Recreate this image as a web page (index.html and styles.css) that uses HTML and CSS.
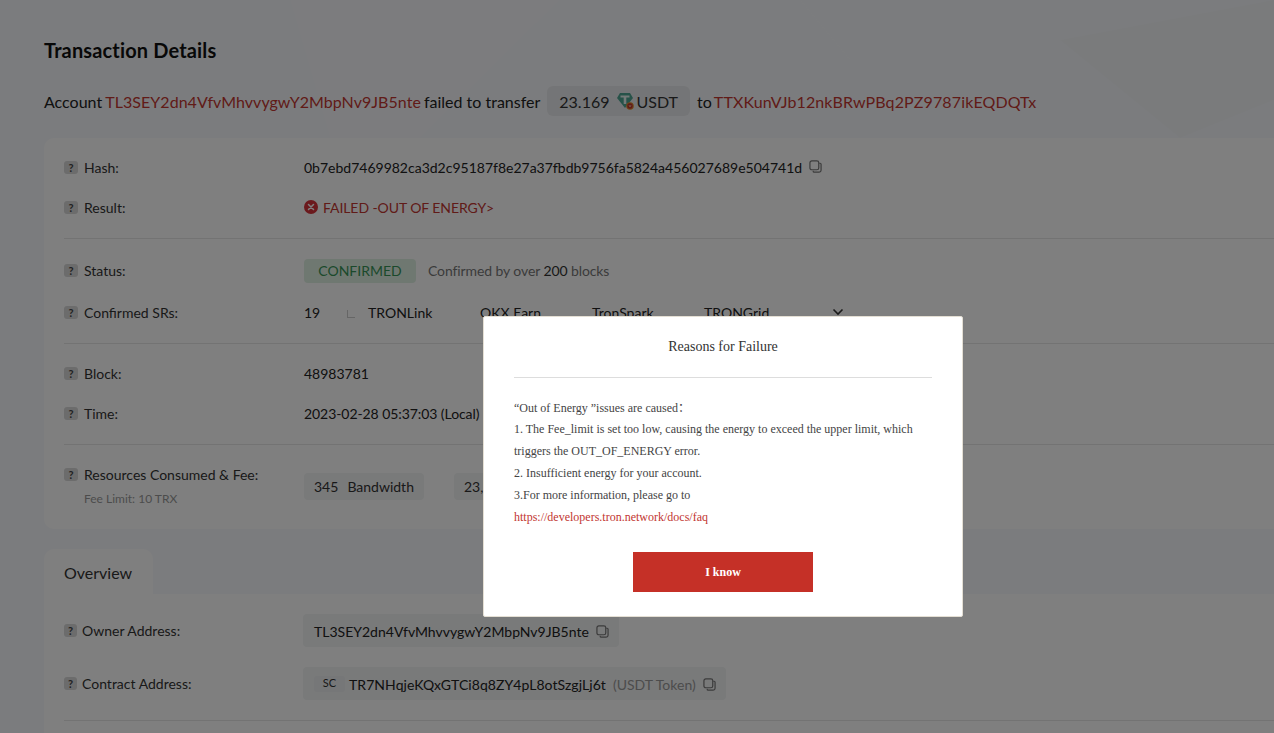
FILE: index.html
```html
<!DOCTYPE html>
<html lang="en">
<head>
   <meta charset="UTF-8">
   <title>Transaction Details</title>
   <link rel="stylesheet" href="styles.css">
</head>
<body>
   <svg class="backdrop" width="1274" height="138" viewBox="0 0 1274 138">
      <polygon points="290,0 560,0 420,138 330,138" fill="#fff" opacity="0.12"/>
      <polygon points="800,0 1000,0 850,60" fill="#fff" opacity="0.1"/>
      <polygon points="1060,40 1274,0 1274,100 1180,138" fill="#000" opacity="0.012"/>
   </svg>
   <div class="page">
      <h1>Transaction Details</h1>
      <div class="summary">
         <span>Account</span>
         <a class="link">TL3SEY2dn4VfvMhvvygwY2MbpNv9JB5nte</a>
         <span>failed to transfer</span>
         <span class="amount">
            <span class="amount-num">23.169</span>
            <svg class="token" width="17" height="18" viewBox="0 0 17 18">
               <path d="M3 1h10l3 5-8 10L0 6z" fill="#4fa593"/>
               <path d="M3.500 3.500h9v2H9.300v6.500H6.700V5.500H3.500z" fill="#e8f3f0"/>
               <circle cx="13" cy="14" r="3.800" fill="#e08a2e"/>
               <circle cx="13" cy="14" r="2.700" fill="#c23631"/>
               <path d="M12 13l1 2 1-2" fill="none" stroke="#f5d9a8" stroke-width="0.700"/>
            </svg>
            <span>USDT</span>
         </span>
         <span class="to">to</span>
         <a class="link to-link">TTXKunVJb12nkBRwPBq2PZ9787ikEQDQTx</a>
      </div>

      <div class="card">
         <div class="group first">
            <div class="row">
               <div class="label"><i class="help">?</i>Hash:</div>
               <div class="value">0b7ebd7469982ca3d2c95187f8e27a37fbdb9756fa5824a456027689e504741d
                  <svg class="copy" width="13" height="13" viewBox="0 0 14 14"><use href="#copy-icon"/></svg>
               </div>
            </div>
            <div class="row">
               <div class="label"><i class="help">?</i>Result:</div>
               <div class="value failed">
                  <svg class="fail-icon" width="14" height="14" viewBox="0 0 14 14">
                     <circle cx="7" cy="7" r="7" fill="#d6333a"/>
                     <path d="M4.500 4.500l5 5M9.500 4.500l-5 5" stroke="#fff" stroke-width="1.500" stroke-linecap="round"/>
                  </svg>
                  FAILED -OUT OF ENERGY&gt;
               </div>
            </div>
         </div>
         <div class="group tall">
            <div class="row">
               <div class="label"><i class="help">?</i>Status:</div>
               <div class="value flush">
                  <span class="status">CONFIRMED</span>
                  <span class="muted">Confirmed by over <b>200</b> blocks</span>
               </div>
            </div>
            <div class="row">
               <div class="label"><i class="help">?</i>Confirmed SRs:</div>
               <div class="value">
                  <span class="sr-count">19</span>
                  <span class="sr-corner"></span>
                  <span class="sr">TRONLink</span>
                  <span class="sr">OKX Earn</span>
                  <span class="sr">TronSpark</span>
                  <span class="sr">TRONGrid</span>
                  <svg class="chevron" width="12" height="8" viewBox="0 0 12 8"><path d="M1.500 1.500L6 6l4.500-4.500" fill="none" stroke="#333" stroke-width="1.600"/></svg>
               </div>
            </div>
         </div>
         <div class="group mid">
            <div class="row">
               <div class="label"><i class="help">?</i>Block:</div>
               <div class="value">48983781</div>
            </div>
            <div class="row">
               <div class="label"><i class="help">?</i>Time:</div>
               <div class="value time">2023-02-28 05:37:03 (Local)</div>
            </div>
         </div>
         <div class="group last">
            <div class="row resources">
               <div class="label-stack">
                  <div class="label"><i class="help">?</i>Resources Consumed &amp; Fee:</div>
                  <div class="fee-limit">Fee Limit: 10 TRX</div>
               </div>
               <div class="value">
                  <span class="res-pill"><span>345</span>Bandwidth</span>
                  <span class="res-pill wide"><span>23,169</span></span>
               </div>
            </div>
         </div>
      </div>

      <div class="tab">Overview</div>
      <div class="card overview">
         <div class="row owner">
            <div class="label"><i class="help small">?</i>Owner Address:</div>
            <div class="value flush">
               <span class="addr-pill">TL3SEY2dn4VfvMhvvygwY2MbpNv9JB5nte
                  <svg class="copy" width="13" height="13" viewBox="0 0 14 14"><use href="#copy-icon"/></svg>
               </span>
            </div>
         </div>
         <div class="row contract">
            <div class="label"><i class="help small">?</i>Contract Address:</div>
            <div class="value flush">
               <span class="addr-pill">
                  <span class="sc">SC</span><span class="contract-addr">TR7NHqjeKQxGTCi8q8ZY4pL8otSzgjLj6t</span>
                  <span class="token-name">(USDT Token)</span>
                  <svg class="copy" width="13" height="13" viewBox="0 0 14 14"><use href="#copy-icon"/></svg>
               </span>
            </div>
         </div>
         <div class="overview-line"></div>
      </div>
   </div>

   <svg width="0" height="0" class="defs">
      <symbol id="copy-icon" viewBox="0 0 14 14">
         <path d="M11 3.500h1a1 1 0 0 1 1 1V11a2 2 0 0 1-2 2H5.500a1 1 0 0 1-1-1v-.5" fill="none" stroke="#777" stroke-width="1.300"/>
         <rect x="1" y="1" width="9.500" height="9.500" rx="2" fill="none" stroke="#777" stroke-width="1.300"/>
      </symbol>
   </svg>

   <div class="mask"></div>
   <div class="modal">
      <div class="modal-title">Reasons for Failure</div>
      <div class="modal-body">
         <div class="first-line">“Out of Energy ”issues are caused：</div>
         <div>1. The Fee_limit is set too low, causing the energy to exceed the upper limit, which triggers the OUT_OF_ENERGY error.</div>
         <div>2. Insufficient energy for your account.</div>
         <div>3.For more information, please go to</div>
         <a class="modal-link">https://developers.tron.network/docs/faq</a>
      </div>
      <button class="modal-btn">I know</button>
   </div>
</body>
</html>
```

FILE: styles.css
```css
* { box-sizing: border-box; }
html, body {
   margin: 0;
   padding: 0;
   height: 733px;
   overflow: hidden;
}
body {
   position: relative;
   background: #f7f9fc;
   font-family: Lato, "Liberation Sans", sans-serif;
   font-size: 14px;
   color: #222;
}
.backdrop {
   position: absolute;
   left: 0;
   top: 0;
}
.defs { position: absolute; }
.page {
   position: relative;
   width: 1440px;
   padding: 39px 0 0 44px;
}
h1 {
   margin: 0;
   font-size: 20px;
   line-height: 22px;
   font-weight: 700;
   letter-spacing: 0.15px;
   color: #111;
}
.summary {
   display: flex;
   align-items: center;
   gap: 3px;
   height: 30px;
   margin-top: 25px;
   font-size: 16px;
   white-space: nowrap;
}
.link {
   color: #c23631;
   letter-spacing: 0.05px;
}
.to-link {
   margin-left: -1px;
   letter-spacing: 0.12px;
}
.amount {
   display: flex;
   align-items: center;
   height: 30px;
   margin-left: 4px;
   padding: 0 12px;
   background: #e9ebee;
   border-radius: 6px;
   color: #333;
}
.amount-num { margin-right: 7px; }
.token { margin-right: 3px; }
.to { margin-left: 4px; }

.card {
   background: #fff;
   border-radius: 10px;
   margin-top: 22px;
   padding: 0 20px;
}
.group {
   padding: 11px 0 10px;
   border-bottom: 1px solid #e6e6e6;
}
.group.first { padding-top: 10px; }
.group.tall { padding-bottom: 9px; }
.group.tall .row { height: 42px; }
.group.mid { padding-top: 10px; }
.group.last {
   padding: 21px 0 0;
   height: 84px;
   border-bottom: none;
}
.row {
   display: flex;
   align-items: center;
   height: 40px;
}
.label {
   display: flex;
   align-items: center;
   width: 240px;
   padding-bottom: 2px;
   flex-shrink: 0;
   color: #333;
}
.help {
   width: 14px;
   height: 13px;
   margin-right: 6px;
   background: #d9d9d9;
   border-radius: 3px;
   color: #444;
   font-size: 11px;
   font-weight: 700;
   font-style: normal;
   line-height: 13px;
   text-align: center;
}
.help.small {
   width: 13px;
   margin-right: 5px;
}
.value {
   display: flex;
   align-items: center;
   padding-bottom: 2px;
   white-space: nowrap;
}
.value.flush { padding-bottom: 0; }
.time { letter-spacing: -0.07px; }
.copy {
   margin: 0 0 1px 7px;
}
.failed {
   color: #c23631;
   gap: 5px;
   letter-spacing: -0.08px;
}
.status {
   width: 112px;
   height: 24px;
   background: #dff0e3;
   border-radius: 4px;
   color: #379457;
   line-height: 24px;
   text-align: center;
}
.muted {
   margin-left: 12px;
   padding-bottom: 2px;
   letter-spacing: -0.1px;
   color: #777;
}
.muted b {
   font-weight: 400;
   color: #333;
}
.sr-count { width: 41px; }
.sr-corner {
   width: 8px;
   height: 8px;
   margin: 3px 13px 0 2px;
   border-left: 1px solid #ccc;
   border-bottom: 1px solid #ccc;
}
.sr { width: 112px; }
.chevron { margin-left: 16px; }

.resources {
   height: 55px;
   align-items: flex-start;
}
.label-stack { width: 240px; }
.fee-limit {
   margin: 6px 0 0 20px;
   font-size: 12px;
   color: #999;
}
.resources .value { padding: 7px 0 0; }
.res-pill {
   display: flex;
   gap: 9px;
   align-items: center;
   height: 27px;
   margin-right: 30px;
   padding: 0 10px;
   background: #f3f4f5;
   border-radius: 4px;
   color: #333;
}
.res-pill.wide { width: 120px; }

.tab {
   width: 109px;
   height: 45px;
   margin-top: 20px;
   padding-left: 20px;
   background: #fff;
   border-radius: 10px 10px 0 0;
   font-size: 16px;
   line-height: 47px;
   color: #333;
}
.overview {
   margin-top: 0;
   height: 200px;
   padding-top: 20px;
   border-radius: 0 10px 10px 10px;
}
.owner { height: 33px; }
.contract {
   height: 33px;
   margin-top: 20px;
}
.overview .label {
   width: 239px;
   padding-bottom: 0;
}
.addr-pill {
   display: flex;
   align-items: center;
   height: 33px;
   padding: 2px 10px 0 11px;
   background: #f3f4f5;
   border-radius: 4px;
}
.sc {
   width: 31px;
   height: 16px;
   margin: 0 4px 2px 0;
   background: #eceef0;
   border-radius: 3px;
   font-size: 11px;
   line-height: 14px;
   text-align: center;
   color: #333;
}
.contract-addr { letter-spacing: 0.06px; }
.token-name {
   margin-left: 7px;
   color: #999;
}
.overview-line {
   margin-top: 20px;
   border-top: 1px solid #e6e6e6;
}

.mask {
   position: absolute;
   left: 0;
   top: 0;
   width: 100%;
   height: 733px;
   background: rgba(0, 0, 0, 0.5);
}
.modal {
   position: absolute;
   left: 483px;
   top: 316px;
   width: 480px;
   height: 301px;
   padding: 0 30px;
   background: #fff;
   border: 1px solid #e4dfd4;
   border-radius: 2px;
   font-family: "Liberation Serif", "Noto Sans CJK SC", serif;
   color: #444;
}
.modal-title {
   height: 61px;
   padding-top: 21px;
   border-bottom: 1px solid #ddd;
   font-size: 14px;
   line-height: 18px;
   text-align: center;
   color: #333;
}
.modal-body {
   margin-top: 19px;
   font-size: 12px;
   line-height: 22px;
}
.first-line { height: 21px; }
.modal-link {
   color: #c23631;
   text-decoration: none;
}
.modal-btn {
   display: block;
   width: 180px;
   height: 40px;
   margin: 24px auto 0;
   background: #c53027;
   border: none;
   color: #fff;
   font-family: "Liberation Serif", serif;
   font-size: 12px;
   font-weight: 700;
}
```
